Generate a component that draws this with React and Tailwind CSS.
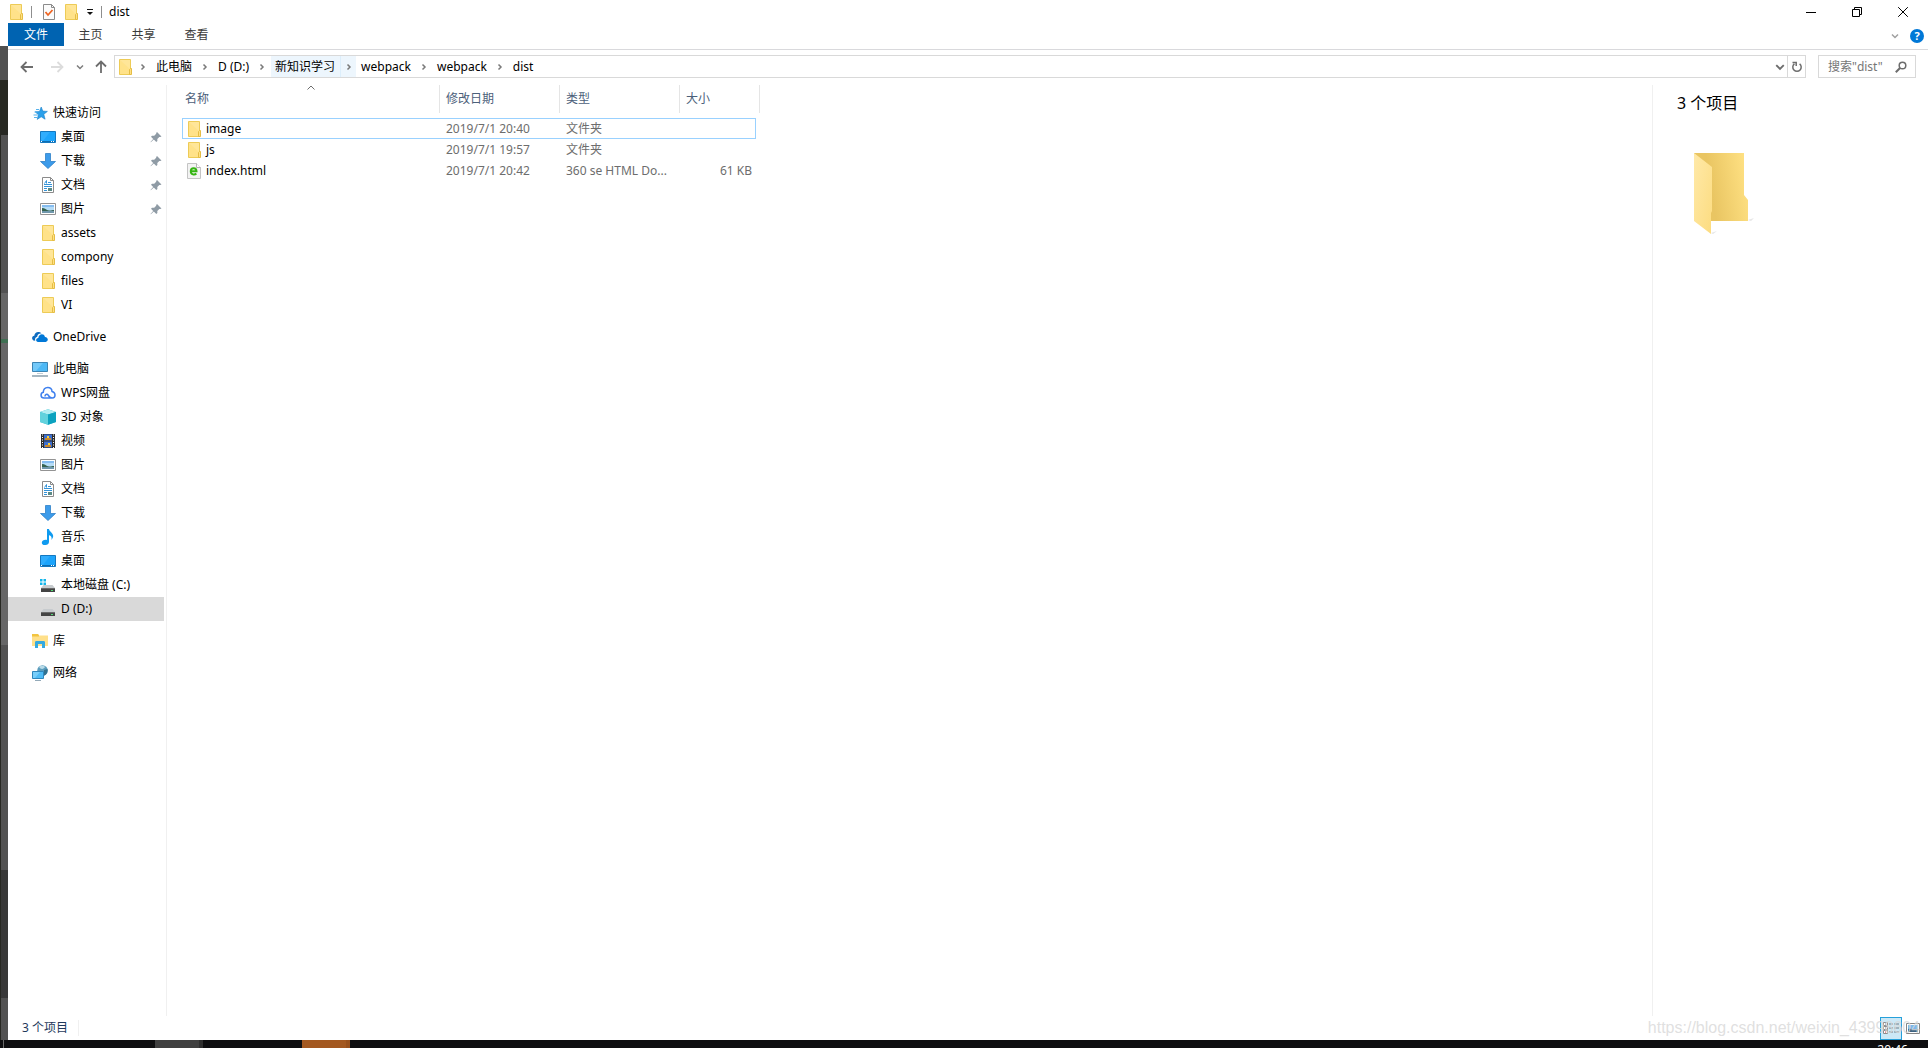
import React from 'react';
import clsx from 'clsx';

/* ---------- icons ---------- */

function Svg({ w = 16, h = 16, className, children }) {
  return (
    <svg width={w} height={h} viewBox={`0 0 ${w} ${h}`} fill="none" aria-hidden="true" className={clsx('shrink-0', className)}>
      {children}
    </svg>
  );
}

function FolderIcon() {
  return (
    <Svg>
      <path d="M2.5.5h11v15h-11z" fill="#ffe699" stroke="#edcb56" />
      <path d="M3 15V1l10 9v5z" fill="#ffdf7f" opacity=".6" />
      <path d="M12.5 15.5v-5l1-1h1v6z" fill="#ffe083" stroke="#e5bd45" />
    </Svg>
  );
}

function StarIcon() {
  return (
    <Svg>
      <path d="M9.2 2l1.6 4.1 4.6.3-3.6 2.9 1.3 4.9-3.9-2.4-4 2.6 1.2-4.6-3.2-3 4.3-.3z" fill="#2ba0ea" stroke="#1b7fc9" strokeWidth=".6" />
      <path d="M4 4.5h3M2.5 7h3M1.5 10h4M2 12.5h3" stroke="#55b2ec" />
    </Svg>
  );
}

function DesktopIcon() {
  return (
    <Svg>
      <path d="M.5 2.5h15v11H.5z" fill="#1ca4fb" stroke="#1478c0" />
      <path d="M1 3h9L3 12H1z" fill="#44b6ff" opacity=".5" />
      <path d="M1 12.5h14" stroke="#0d6cb0" />
      <path d="M1 12.5h1m9 0h1m1 0h1" stroke="#fff" />
    </Svg>
  );
}

function DownloadIcon() {
  return (
    <Svg>
      <path d="M5.5.5h5v8h5L8 15.5.5 8.5h5z" fill="#3c9bea" stroke="#2f80c8" strokeWidth=".8" />
    </Svg>
  );
}

function DocumentIcon() {
  return (
    <Svg>
      <path d="M2.5.5h8l3 3v12h-11z" fill="#fff" stroke="#8b8b8b" />
      <path d="M10.5.5v3h3" stroke="#8b8b8b" />
      <path d="M4.500 6.500l2-3v3M8 5.500h3M4 7.500h8M4 9.500h8M4 11.500h3M4 13.500h3" stroke="#3493d8" />
      <path d="M8 11h4v3H8z" fill="#5c8a86" />
    </Svg>
  );
}

function PictureIcon() {
  return (
    <Svg>
      <path d="M.5 2.500h15v11H.5z" fill="#fff" stroke="#939393" />
      <path d="M2 4h12v8H2z" fill="#b5dcf7" />
      <path d="M2 4h12v2H2z" fill="#86bdf0" />
      <path d="M2 7c3 0 4 2 7 2.500 2 .3 3-.5 5-.5v1H2z" fill="#35624f" />
      <path d="M2 10h12v2H2z" fill="#6f97ac" />
    </Svg>
  );
}

function OneDriveIcon() {
  return (
    <Svg>
      <path d="M1.500 11.500C-.7 10-.2 7 2.300 6.700 2.500 3.400 6.500 1.500 9.500 4.300c-3.300.2-4 1.900-4.300 3.500-2 .6-2.500 2.400-1.900 3.900z" fill="#0f6cbf" />
      <path d="M6 13c-2.600-.3-2.500-3.900.3-4.100C6.700 4.800 12 4 13 7.900c3.500.2 3.700 4.600.7 5.100z" fill="#0078d7" />
    </Svg>
  );
}

function ComputerIcon() {
  return (
    <Svg>
      <path d="M.5 1.500h15v9H.5z" fill="#4db8f5" stroke="#3b84b4" />
      <path d="M1 2h10L4 10H1z" fill="#83d0fb" opacity=".7" />
      <path d="M5 12.500h6" stroke="#c3cdd4" />
      <path d="M0 15h16" stroke="#8a9fad" strokeWidth="1.500" />
    </Svg>
  );
}

function CloudIcon() {
  return (
    <Svg>
      <path d="M11.500 13H4C.2 12.800.2 8 3.300 7.300 3.500 1 12 1 12 6.500c4 .8 4 6.300.2 6.500-2 0-3-1-4-2.800-1.100-1.900-3.700-.5-3 1.300" stroke="#3f80ee" strokeWidth="1.500" />
    </Svg>
  );
}

function CubeIcon() {
  return (
    <Svg>
      <path d="M0 3l8-2.800L16 3v10l-8 2.800L0 13z" fill="#2cb8cd" />
      <path d="M0 3l8-2.800L16 3 8 5.500z" fill="#b3edf2" />
      <path d="M0 3l8 2.500v10.300L0 13z" fill="#62d2dd" />
      <path d="M8 5.500L16 3v10l-8 2.800z" fill="#0ba2bf" />
    </Svg>
  );
}

function VideoIcon() {
  return (
    <Svg>
      <path d="M1 1h14v14H1z" fill="#2d2d2d" />
      <path d="M4 1.500h8v6H4zM4 8.500h8v6H4z" fill="#3c6fd0" />
      <path d="M5 5h6v2H5zM5 12h6v2H5z" fill="#cf8a27" />
      <path d="M7 3h2v2H7zM8 10h2v2H8z" fill="#f3d041" />
      <path d="M2.500 1.500v14M13.500 1.500v14" stroke="#fff" strokeDasharray="1 1.500" />
    </Svg>
  );
}

function MusicIcon() {
  return (
    <Svg>
      <path d="M7 0h2c.3 3 4.800 4 4.100 7.800-.3 1.500-1 2.400-1.800 3.200.9-3-.4-4.500-2.300-4.800V13c0 3.700-7 4-7.200.9C1.600 11.500 4.600 10.300 7 11z" fill="#0f9bf0" />
    </Svg>
  );
}

function DriveIcon({ system }) {
  return (
    <Svg>
      <path d="M3.500 8h9L15 11H1z" fill="#c7cbce" />
      <path d="M1 11h14v4H1z" fill="#444" />
      <path d="M1 11.500h14" stroke="#6a6a6a" />
      <path d="M11 13.500h2" stroke="#53dc74" />
      {system && (
        <>
          <path d="M0 2h6v6H0z" fill="#fff" />
          <path d="M0 2h2.500v2.500H0zM3.500 2H6v2.500H3.500zM0 5.500h2.500V8H0zM3.500 5.500H6V8H3.500z" fill="#13b5ea" />
        </>
      )}
    </Svg>
  );
}

function LibraryIcon() {
  return (
    <Svg>
      <path d="M0 1h6l1 1.500h9V13H0z" fill="#ffe08a" />
      <path d="M0 1h6l1 1.500v1H0z" fill="#f2c440" />
      <path d="M3 15V9.500C3 8.500 3.500 8 4.500 8h7c1 0 1.500.5 1.500 1.500V15h-3v-4H6v4z" fill="#35a9e0" />
    </Svg>
  );
}

function NetworkIcon() {
  return (
    <Svg>
      <circle cx="10.500" cy="5.500" r="5.300" fill="#5c9dbd" />
      <path d="M7 2c2-2 5-1.500 6 0-1 2-4 3-6 0z" fill="#b9dbe8" />
      <path d="M12 5l3.500-1c.5 3-1 6-3.500 6.500z" fill="#33718f" />
      <path d="M.5 6.500h11v7H.5z" fill="#4fbcf6" stroke="#2f87bd" />
      <path d="M1 7h7l-5 6H1z" fill="#8ad6fc" opacity=".7" />
      <path d="M3 15.500h6" stroke="#93a9b8" />
    </Svg>
  );
}

function PinIcon() {
  return (
    <Svg w={12} h={12}>
      <path d="M7 1l4.500 4.500-1.200.5-1 .1-2 2 .1 2L6.300 11 3.800 8.400.800 11.300l-.3-.3 2.700-3L1 5.700l1-1 2.200.1 2-2L6.200 2z" fill="#8f9ba5" />
    </Svg>
  );
}

function HtmlFileIcon() {
  return (
    <Svg>
      <path d="M1.500.5h9l4 4v11h-13z" fill="#f3f3f3" stroke="#c4c4c4" />
      <path d="M10.500.5v4h4" stroke="#b4b4b4" fill="#fff" />
      <path d="M5 8.200h5.500C10.300 4.300 4.800 4.500 4.800 8.300c0 3.500 3.800 4 5.500 2.200" stroke="#35b512" strokeWidth="2" />
    </Svg>
  );
}

function PropertiesIcon() {
  return (
    <Svg>
      <path d="M2.500.5h8l3 3v12h-11z" fill="#fbfbfb" stroke="#8b8b8b" />
      <path d="M10.500.5v3h3" stroke="#8b8b8b" />
      <path d="M4.500 8l2.500 3 4.500-5" stroke="#ee6421" strokeWidth="1.800" />
    </Svg>
  );
}

function LargeFolder() {
  return (
    <svg width="64" height="84" viewBox="0 0 64 84" aria-hidden="true">
      <defs>
        <linearGradient id="folder-back" x1="0" y1="0.500" x2="1" y2="0.300">
          <stop offset="0.300" stopColor="#e9c562" />
          <stop offset="1" stopColor="#ffe183" />
        </linearGradient>
        <linearGradient id="folder-front" x1="0" y1="0" x2="1" y2="1">
          <stop offset="0" stopColor="#ffe9a8" />
          <stop offset="1" stopColor="#fcdc80" />
        </linearGradient>
      </defs>
      <path d="M17 80l6-2-4 3zM54 67l6-2-3 3z" fill="#e6e6e6" />
      <path d="M0 0h50v42l4 5v21H17L0 60z" fill="url(#folder-back)" />
      <path d="M0 0l18 14v44l-1 2v21L0 68z" fill="url(#folder-front)" />
    </svg>
  );
}

function Chevron({ dir = 'right', className }) {
  return (
    <Svg w={8} h={8} className={className}>
      {dir === 'right' && <path d="M2.500 1.500L5 4 2.500 6.500" stroke="currentColor" strokeWidth="1.500" />}
      {dir === 'down' && <path d="M1 2.500l3 3 3-3" stroke="currentColor" strokeWidth="1.500" />}
      {dir === 'up' && <path d="M.5 4.500L4 1l3.500 3.500" stroke="currentColor" />}
    </Svg>
  );
}

/* ---------- data ---------- */

const navGroups = [
  [
    { label: '快速访问', icon: <StarIcon />, root: true },
    { label: '桌面', icon: <DesktopIcon />, pinned: true },
    { label: '下载', icon: <DownloadIcon />, pinned: true },
    { label: '文档', icon: <DocumentIcon />, pinned: true },
    { label: '图片', icon: <PictureIcon />, pinned: true },
    { label: 'assets', icon: <FolderIcon /> },
    { label: 'compony', icon: <FolderIcon /> },
    { label: 'files', icon: <FolderIcon /> },
    { label: 'VI', icon: <FolderIcon /> },
  ],
  [{ label: 'OneDrive', icon: <OneDriveIcon />, root: true }],
  [
    { label: '此电脑', icon: <ComputerIcon />, root: true },
    { label: 'WPS网盘', icon: <CloudIcon /> },
    { label: '3D 对象', icon: <CubeIcon /> },
    { label: '视频', icon: <VideoIcon /> },
    { label: '图片', icon: <PictureIcon /> },
    { label: '文档', icon: <DocumentIcon /> },
    { label: '下载', icon: <DownloadIcon /> },
    { label: '音乐', icon: <MusicIcon /> },
    { label: '桌面', icon: <DesktopIcon /> },
    { label: '本地磁盘 (C:)', icon: <DriveIcon system /> },
    { label: 'D (D:)', icon: <DriveIcon />, selected: true },
  ],
  [{ label: '库', icon: <LibraryIcon />, root: true }],
  [{ label: '网络', icon: <NetworkIcon />, root: true }],
];

const crumbs = ['此电脑', 'D (D:)', '新知识学习', 'webpack', 'webpack', 'dist'];
const hoveredCrumb = 2;

const files = [
  { name: 'image', icon: <FolderIcon />, date: '2019/7/1 20:40', type: '文件夹', size: '', focused: true },
  { name: 'js', icon: <FolderIcon />, date: '2019/7/1 19:57', type: '文件夹', size: '' },
  { name: 'index.html', icon: <HtmlFileIcon />, date: '2019/7/1 20:42', type: '360 se HTML Do...', size: '61 KB' },
];

/* ---------- window parts ---------- */

function TitleBar() {
  return (
    <header className="flex h-[23px] items-center pr-[2px]">
      <FolderIcon />
      <span className="ml-[7px] h-3 w-px bg-[#8e8e8e]" />
      <button type="button" aria-label="属性" className="ml-[9px]"><PropertiesIcon /></button>
      <button type="button" aria-label="新建文件夹" className="ml-[6px]"><FolderIcon /></button>
      <button type="button" aria-label="自定义快速访问工具栏" className="ml-[7px]">
        <Svg w={8} h={8}>
          <path d="M1 1.500h6" stroke="#111" />
          <path d="M1 4h6L4 7z" fill="#111" />
        </Svg>
      </button>
      <span className="ml-[7px] h-3 w-px bg-[#8e8e8e]" />
      <h1 className="ml-[7px] flex-1">dist</h1>
      <button type="button" aria-label="最小化" className="flex h-5 w-[46px] items-center justify-center">
        <Svg w={10} h={10}><path d="M0 5.500h10" stroke="#000" /></Svg>
      </button>
      <button type="button" aria-label="还原" className="flex h-5 w-[46px] items-center justify-center">
        <Svg w={10} h={10}><path d="M.5 2.500h7v7h-7zM2.500 2.500v-2h7v7h-2" stroke="#000" /></Svg>
      </button>
      <button type="button" aria-label="关闭" className="flex h-5 w-[46px] items-center justify-center">
        <Svg w={10} h={10}><path d="M.2.2l9.600 9.600M9.800.2L.2 9.800" stroke="#000" /></Svg>
      </button>
    </header>
  );
}

function RibbonTabs() {
  return (
    <div className="flex h-[27px] items-start border-b border-[#d9d9dc]">
      <button type="button" className="h-[23px] w-14 bg-[#0063b1] text-white">文件</button>
      {['主页', '共享', '查看'].map((t) => (
        <button key={t} type="button" className="h-[23px] w-[53px] text-[#3b3b3b]">{t}</button>
      ))}
      <div className="ml-auto flex h-[26px] items-center gap-[11px] pr-1">
        <button type="button" aria-label="展开功能区" className="text-[#a0a0a0]"><Chevron dir="down" /></button>
        <button type="button" aria-label="帮助" className="flex size-[14px] items-center justify-center rounded-full bg-[#0078d7] text-[11px] font-bold leading-3 text-white">?</button>
      </div>
    </div>
  );
}

function AddressBar() {
  return (
    <div className="mb-[2px] flex h-[33px] items-center pl-3 pr-3">
      <button type="button" aria-label="后退">
        <Svg w={14} h={14}><path d="M13 7H2M6.500 2L1.500 7l5 5" stroke="#6d6d6d" strokeWidth="1.800" /></Svg>
      </button>
      <button type="button" aria-label="前进" className="ml-4">
        <Svg w={14} h={14}><path d="M1 7h11M7.500 2l5 5-5 5" stroke="#dcdcdc" strokeWidth="1.800" /></Svg>
      </button>
      <button type="button" aria-label="最近浏览的位置" className="ml-3 text-[#7d7d7d]"><Chevron dir="down" /></button>
      <button type="button" aria-label="上移" className="ml-[10px]">
        <Svg w={14} h={14}><path d="M7 13V2M2 6.500l5-5 5 5" stroke="#6d6d6d" strokeWidth="1.800" /></Svg>
      </button>

      <nav aria-label="地址" className="ml-[6px] flex h-[23px] flex-1 items-stretch border border-[#d9d9d9]">
        <span className="flex w-5 items-center pl-[2px]"><FolderIcon /></span>
        <span className="flex w-4 items-center justify-center text-[#7a7a7a]"><Chevron /></span>
        {crumbs.map((c, i) => (
          <span key={i} className={clsx('ml-px flex', i === hoveredCrumb && 'bg-[#edf6fd]')}>
            <button type="button" className="pl-1 pr-[5px]">{c}</button>
            {i < crumbs.length - 1 && (
              <button
                type="button"
                aria-label={`${c} 的子文件夹`}
                className={clsx(
                  'flex w-4 items-center justify-center text-[#7a7a7a]',
                  i === hoveredCrumb && 'border-l border-[#dceefb]'
                )}
              >
                <Chevron />
              </button>
            )}
          </span>
        ))}
        <button type="button" aria-label="以前的位置" className="ml-auto flex w-[14px] items-center justify-center text-[#6d6d6d]">
          <Chevron dir="down" className="scale-125" />
        </button>
        <button type="button" aria-label="刷新" className="flex w-[18px] items-center justify-center border-l border-[#d9d9d9]">
          <Svg w={12} h={12}>
            <path d="M8.600 2.800a4.200 4.200 0 1 1-5.200 0M1.500 1.500H5.200V5" stroke="#6d6d6d" strokeWidth="1.500" />
          </Svg>
        </button>
      </nav>

      <label className="ml-3 flex h-[23px] w-[98px] items-center border border-[#d9d9d9] pl-[9px] pr-2">
        <input
          type="text"
          aria-label="搜索"
          placeholder={'搜索"dist"'}
          className="w-0 flex-1 bg-transparent outline-none placeholder:text-[#767676]"
        />
        <Svg w={12} h={12}>
          <circle cx="7.500" cy="4.500" r="3.300" stroke="#6d6d6d" strokeWidth="1.500" />
          <path d="M5 7L.8 11.200" stroke="#6d6d6d" strokeWidth="2" />
        </Svg>
      </label>
    </div>
  );
}

function NavItem({ item }) {
  return (
    <li>
      <a
        href="#"
        className={clsx(
          'mr-[2px] flex h-6 items-center gap-[5px] pr-[2px]',
          item.root ? 'pl-6' : 'pl-8',
          item.selected && 'bg-[#d9d9d9]'
        )}
      >
        {item.icon}
        <span className="flex-1 whitespace-nowrap">{item.label}</span>
        {item.pinned && <PinIcon />}
      </a>
    </li>
  );
}

function NavPane() {
  return (
    <nav className="flex w-[159px] shrink-0 flex-col gap-2 border-r border-[#f0f0f0] pt-4">
      {navGroups.map((group, i) => (
        <ul key={i}>
          {group.map((item) => <NavItem key={item.label} item={item} />)}
        </ul>
      ))}
    </nav>
  );
}

function FileList() {
  return (
    <main className="min-w-0 flex-1 pl-[15px]">
      <table className="w-[578px] table-fixed border-separate border-spacing-0 text-left text-[#6d6d6d]">
        <colgroup>
          <col className="w-[258px]" />
          <col className="w-[120px]" />
          <col className="w-[120px]" />
          <col className="w-[76px]" />
          <col className="w-1" />
        </colgroup>
        <thead className="text-[#4c607a]">
          <tr className="h-7">
            <th className="relative border-r border-[#e5e5e5] pl-[3px] font-normal">
              名称
              <Chevron dir="up" className="absolute left-1/2 top-0 -translate-x-1/2 text-[#6d6d6d]" />
            </th>
            <th className="border-r border-[#e5e5e5] pl-[6px] font-normal">修改日期</th>
            <th className="border-r border-[#e5e5e5] pl-[6px] font-normal">类型</th>
            <th className="pl-[6px] font-normal">大小</th>
            <td className="border-r border-[#e5e5e5]" />
          </tr>
        </thead>
        <tbody>
          <tr className="h-[5px]"><td colSpan={5} /></tr>
          {files.map((f) => {
            const cell = clsx('border-y', f.focused ? 'border-[#99d1ff]' : 'border-transparent');
            return (
              <tr key={f.name} className="h-[21px]">
                <td className={clsx(cell, 'border-l pl-[3px] text-black')}>
                  <span className="flex items-center gap-1">{f.icon}{f.name}</span>
                </td>
                <td className={clsx(cell, 'pl-[6px]')}>{f.date}</td>
                <td className={clsx(cell, 'whitespace-nowrap pl-[6px]')}>{f.type}</td>
                <td className={clsx(cell, 'border-r pr-[3px] text-right')}>{f.size}</td>
                <td />
              </tr>
            );
          })}
        </tbody>
      </table>
    </main>
  );
}

function DetailsPane() {
  return (
    <aside className="w-[276px] shrink-0 border-l border-[#f0f0f0] pl-6 pt-[6px]">
      <h2 className="text-base leading-6">3 个项目</h2>
      <div className="pl-[17px] pt-[38px]"><LargeFolder /></div>
    </aside>
  );
}

function StatusBar() {
  return (
    <footer className="relative flex h-6 items-center pl-[14px] pr-2 text-[#1e395b]">
      <span className="border-r border-[#f0f0f0] pr-[10px]">3 个项目</span>
      <button type="button" aria-label="详细信息" className="ml-auto flex h-[23px] w-[22px] items-center justify-center self-end border border-[#26a0da] bg-[#cce8f6]">
        <Svg w={16} h={13}>
          <path d="M.5.5h4v3h-4zM.5 4.500h4v3h-4zM.5 8.500h4v3h-4z" fill="#fff" stroke="#8c8c8c" />
          <path d="M2 2h1M2 6h1" stroke="#7a7a7a" />
          <path d="M2 10h1" stroke="#d02020" />
          <path d="M6 2h4m1 0h5M6 6h4m1 0h5M6 10h4m1 0h5" stroke="#6f7f88" />
        </Svg>
      </button>
      <button type="button" aria-label="大缩略图" className="ml-1">
        <Svg w={14} h={11}>
          <path d="M.5.5h13v10H.5z" fill="#fff" stroke="#858585" />
          <path d="M2 2h10v7H2z" fill="#7db8ec" />
          <path d="M2 6c3-1 4 1 10 0v3H2z" fill="#3c6280" />
        </Svg>
      </button>
      {/* watermark sits over the status bar */}
      <span className="pointer-events-none absolute bottom-0 right-2 font-['Liberation_Sans',sans-serif] text-base leading-6 text-[#d8d8d8]/80">
        https://blog.csdn.net/weixin_43998604
      </span>
    </footer>
  );
}

/* Slice of the editor visible behind the left edge of the window */
function BackgroundEdge() {
  return (
    <div className="flex w-2 shrink-0 flex-col">
      <div className="h-[46px] bg-white" />
      <div className="h-[34px] bg-[#515151]" />
      <div className="h-[55px] bg-[#272822]" />
      <div className="flex flex-1 flex-col border-l border-[#272822]">
        <div className="h-[158px] bg-[#525252]" />
        <div className="h-[46px] bg-[#666666]" />
        <div className="h-1 bg-[#3f6f52]" />
        <div className="h-[302px] bg-[#666666]" />
        <div className="h-[225px] bg-[#525252]" />
        <div className="h-[128px] bg-[#383838]" />
        <div className="flex-1 bg-[#525252]" />
      </div>
    </div>
  );
}

function Taskbar() {
  return (
    <div className="flex h-2 shrink-0 overflow-hidden bg-[#0e0e10]">
      <div className="ml-[3px] w-px bg-[#6a6a6a]" />
      <div className="ml-[151px] w-11 bg-[#404040]" />
      <div className="w-1 bg-[#2f2f2f]" />
      <div className="ml-[99px] w-11 bg-[#a35820]" />
      <div className="w-1 bg-[#98501c]" />
      <time className="ml-auto mr-5 pt-[2px] text-white">20:46</time>
    </div>
  );
}

export default function App() {
  return (
    <div className="flex h-screen flex-col overflow-hidden bg-white font-['Noto_Sans','Noto_Sans_CJK_SC',sans-serif] text-xs leading-4 text-black">
      <div className="flex min-h-0 flex-1">
        <BackgroundEdge />
        <div className="flex min-w-0 flex-1 flex-col">
          <TitleBar />
          <RibbonTabs />
          <AddressBar />
          <div className="flex min-h-0 flex-1">
            <NavPane />
            <FileList />
            <DetailsPane />
          </div>
          <StatusBar />
        </div>
      </div>
      <Taskbar />
    </div>
  );
}
